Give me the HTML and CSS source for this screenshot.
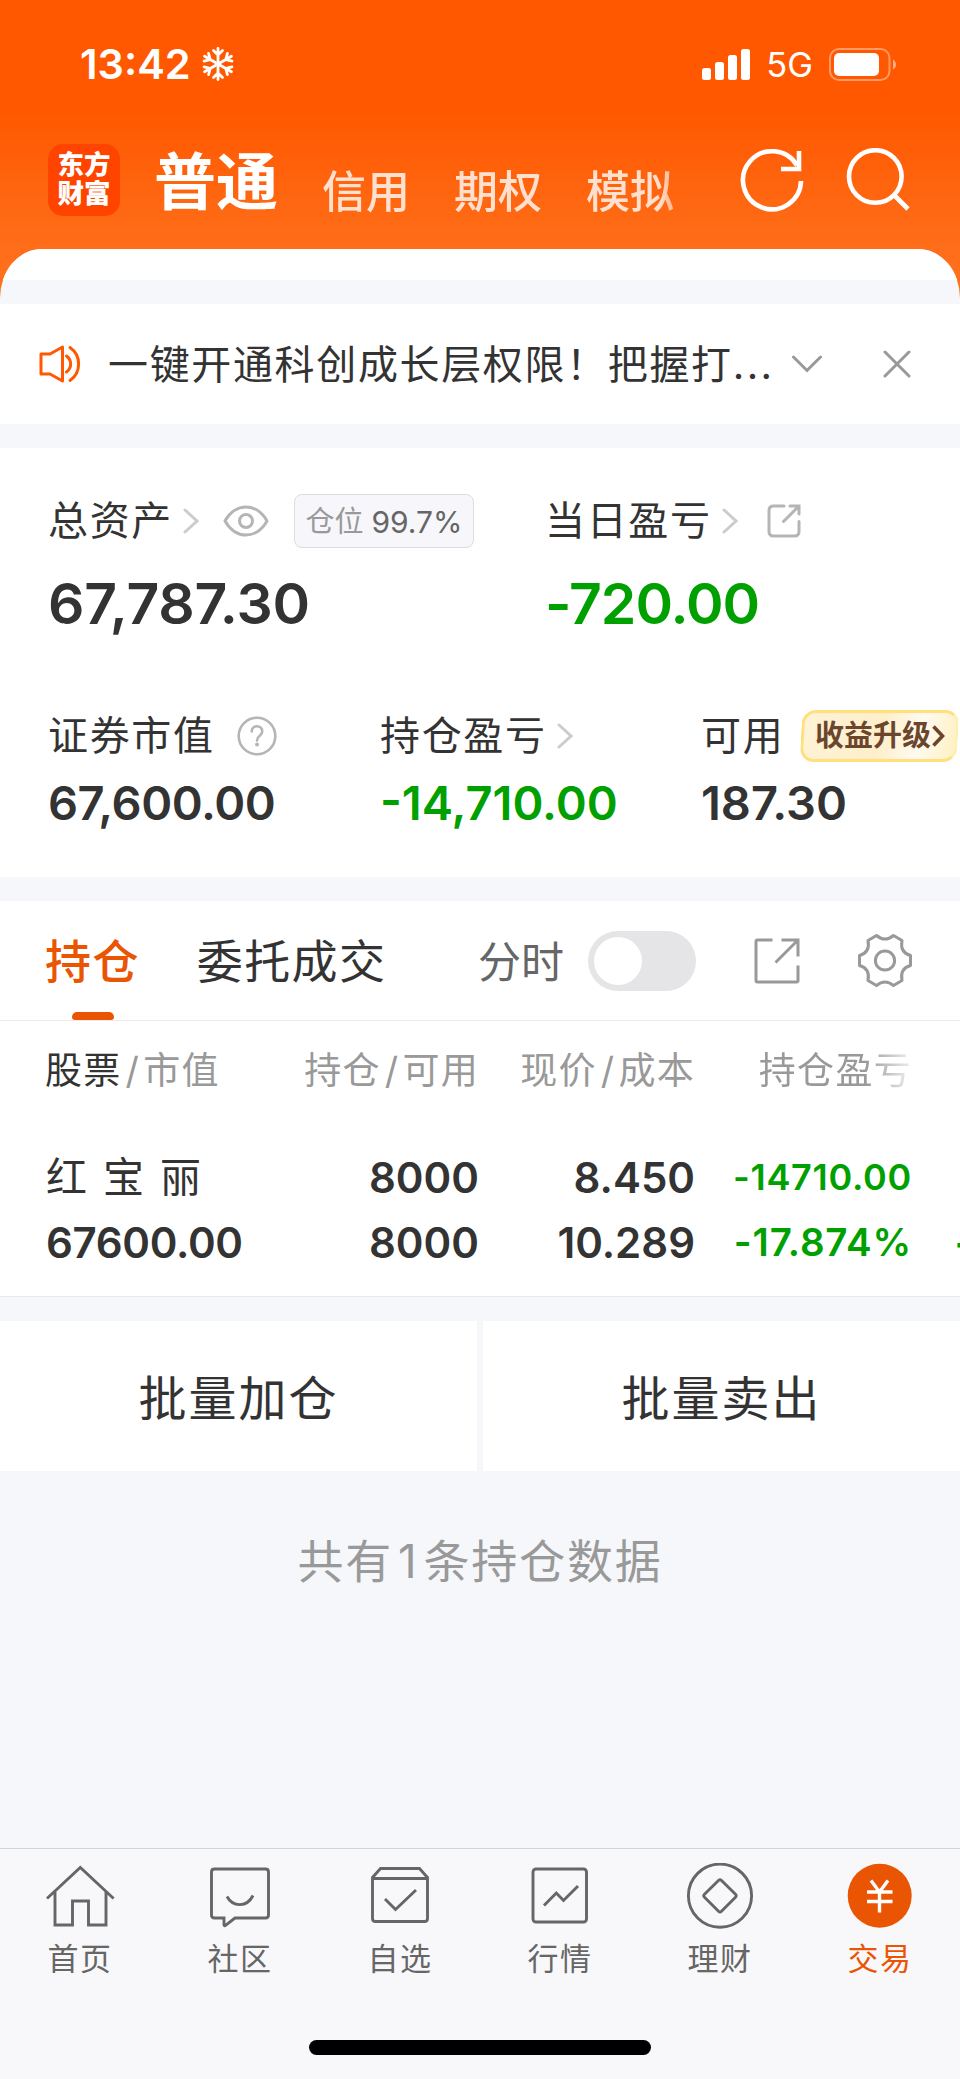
FILE: index.html
```html
<!DOCTYPE html>
<html lang="zh-CN">
<head>
  <meta charset="UTF-8" />
  <title>交易 - 东方财富</title>
  <meta name="viewport" content="width=device-width, initial-scale=1.0" />
  <link rel="stylesheet" href="styles.css">
</head>
<body>
  <div class="app">
    <header class="header">
      <div class="status-bar">
        <span class="time">13:42</span>
        <svg class="snow" width="32" height="36" viewBox="0 0 32 36" fill="none" stroke="#fff" stroke-width="2.8" stroke-linecap="round">
          <g id="arm"><path d="M16 18V2.500M11.500 4.500L16 9l4.500-4.500"/></g>
          <use href="#arm" transform="rotate(60 16 18)"/>
          <use href="#arm" transform="rotate(120 16 18)"/>
          <use href="#arm" transform="rotate(180 16 18)"/>
          <use href="#arm" transform="rotate(240 16 18)"/>
          <use href="#arm" transform="rotate(300 16 18)"/>
        </svg>
        <svg class="signal" width="48" height="31" viewBox="0 0 48 31" fill="#fff">
          <rect x="0" y="19" width="9" height="12" rx="2.500"/>
          <rect x="13" y="13" width="9" height="18" rx="2.500"/>
          <rect x="26" y="6" width="9" height="25" rx="2.500"/>
          <rect x="39" y="0" width="9" height="31" rx="2.500"/>
        </svg>
        <span class="network">5G</span>
        <svg class="battery" width="68" height="33" viewBox="0 0 68 33">
          <rect x="1" y="1" width="59.500" height="31" rx="9" fill="none" stroke="#fff" stroke-opacity=".4" stroke-width="2"/>
          <rect x="5" y="5" width="45" height="23" rx="5" fill="#fff"/>
          <path d="M64 11.500c4 2 4 8 0 10z" fill="#fff" fill-opacity=".5"/>
        </svg>
      </div>
      <div class="nav-bar">
        <div class="logo"><span>东方</span><span>财富</span></div>
        <nav class="accounts">
          <a class="account active">普通</a>
          <a class="account">信用</a>
          <a class="account">期权</a>
          <a class="account">模拟</a>
        </nav>
        <svg class="refresh" width="64" height="64" viewBox="0 0 64 64" fill="none" stroke="#fff" stroke-width="4.600">
          <path d="M61 33A29 29 0 1 1 57 17.500"/>
          <path d="M59 3v18H41"/>
        </svg>
        <svg class="search" width="64" height="64" viewBox="0 0 64 64" fill="none" stroke="#fff" stroke-width="4.600">
          <circle cx="29.300" cy="28.500" r="26.300"/>
          <path d="M48 47l14 14"/>
        </svg>
      </div>
    </header>

    <main class="sheet">
      <div class="sheet-top"></div>

      <section class="notice">
        <svg class="speaker" width="42" height="38" viewBox="0 0 42 38" fill="none" stroke="#ff5800" stroke-width="3" stroke-linecap="round" stroke-linejoin="round">
          <path d="M2 9h9L23.500 2v34L11 29H2z"/>
          <path d="M27.500 11c5.500 4 5.500 12 0 16M31 2.500c11.500 8 11.500 25 0 33"/>
        </svg>
        <p class="notice-text">一键开通科创成长层权限！把握打<span class="dots">...</span></p>
        <svg class="notice-more" width="30" height="18" viewBox="0 0 30 18" fill="none" stroke="#999" stroke-width="3" stroke-linecap="round"><path d="M1.500 2L15 15.500 28.500 2"/></svg>
        <svg class="notice-close" width="28" height="28" viewBox="0 0 28 28" fill="none" stroke="#999" stroke-width="3" stroke-linecap="round"><path d="M2 2l24 24M26 2L2 26"/></svg>
      </section>

      <section class="assets">
        <div class="asset-row main-row">
          <div class="asset">
            <div class="label">总资产
              <svg class="arrow" width="16" height="26" viewBox="0 0 16 26"><path d="M2 2l12 11L2 24"/></svg>
              <svg class="eye" width="46" height="32" viewBox="0 0 46 32" fill="none" stroke="#b5b5b5" stroke-width="3">
                <path d="M2 16C7 7 15 2 23 2s16 5 21 14c-5 9-13 14-21 14S7 25 2 16z" stroke-linejoin="round"/>
                <circle cx="23" cy="16" r="6.500"/>
              </svg>
              <span class="ratio">仓位 <b>99.7%</b></span>
            </div>
            <div class="value total">67,787.30</div>
          </div>
          <div class="asset">
            <div class="label">当日盈亏
              <svg class="arrow" width="16" height="26" viewBox="0 0 16 26"><path d="M2 2l12 11L2 24"/></svg>
              <svg class="share" width="36" height="36" viewBox="0 0 36 36" fill="none" stroke="#b5b5b5" stroke-width="3" stroke-linecap="round">
                <path d="M18 3H7.500Q3 3 3 7.500v21Q3 33 7.500 33h21q4.500 0 4.500-4.500V18.500"/>
                <path d="M24 3h9v8M32.500 3.500L17.500 18.500"/>
              </svg>
            </div>
            <div class="value today down">-720.00</div>
          </div>
        </div>
        <div class="asset-row sub-row">
          <div class="asset">
            <div class="label">证券市值
              <svg class="help" width="40" height="40" viewBox="0 0 40 40" fill="none" stroke="#b5b5b5" stroke-width="2.600">
                <circle cx="20" cy="20" r="18.300"/>
                <path d="M14.800 15.500c0-7 10.400-7 10.400 0 0 4.500-5.200 4-5.200 9" stroke-linecap="round"/>
                <circle cx="20" cy="28.500" r="2" fill="#b5b5b5" stroke="none"/>
              </svg>
            </div>
            <div class="value market">67,600.00</div>
          </div>
          <div class="asset">
            <div class="label">持仓盈亏
              <svg class="arrow" width="16" height="26" viewBox="0 0 16 26"><path d="M2 2l12 11L2 24"/></svg>
            </div>
            <div class="value down">-14,710.00</div>
          </div>
          <div class="asset">
            <div class="label">可用
              <span class="upgrade"><span>收益升级</span>
                <svg width="13" height="22" viewBox="0 0 13 22" fill="none" stroke="#6b462c" stroke-width="3.600"><path d="M1.500 1.500L10.500 11 1.500 20.500"/></svg>
              </span>
            </div>
            <div class="value">187.30</div>
          </div>
        </div>
      </section>

      <section class="positions">
        <div class="tabs">
          <a class="tab active">持仓</a>
          <a class="tab">委托成交</a>
          <span class="minute">分时</span>
          <span class="switch"></span>
          <svg class="export" width="46" height="46" viewBox="0 0 46 46" fill="none" stroke="#999" stroke-width="3">
            <path d="M18.500 2H3.500Q2 2 2 3.500v39Q2 44 3.500 44h39q1.500 0 1.500-1.500V27.500"/>
            <path d="M27.500 2H44V18.500M43.500 2.500L21.500 24.500"/>
          </svg>
          <svg class="gear" width="56" height="56" viewBox="0 0 56 56" fill="none" stroke="#999" stroke-width="3" stroke-linejoin="round">
            <path d="M19.500 2.500Q28 9.500 36.500 2.500L45 7.500C43.500 15 46.500 20.500 53.500 22.500V32.500C46.500 34.500 43.500 40 45 47.500L36.500 52.500Q28 45.500 19.500 52.500L11 47.500C12.500 40 9.500 34.500 2.500 32.500V22.500C9.500 20.500 12.500 15 11 7.500Z"/>
            <circle cx="28" cy="27.500" r="9.600"/>
          </svg>
        </div>
        <div class="table table-head">
          <div><em>股票</em><i>/</i>市值</div>
          <div>持仓<i>/</i>可用</div>
          <div>现价<i>/</i>成本</div>
          <div class="fade">持仓盈亏</div>
        </div>
        <div class="table table-row">
          <div class="stock-name">红宝丽</div>
          <div>8000</div>
          <div>8.450</div>
          <div class="down profit">-14710.00</div>
          <div></div>
          <div class="amount">67600.00</div>
          <div>8000</div>
          <div>10.289</div>
          <div class="down rate">-17.874%</div>
          <div class="down next">-</div>
        </div>
      </section>

      <section class="batch">
        <button class="batch-btn">批量加仓</button>
        <button class="batch-btn">批量卖出</button>
      </section>
      <p class="count">共有<span>1</span>条持仓数据</p>
    </main>

    <footer class="tabbar">
      <div class="tabbar-items">
        <a class="item">
          <svg width="72" height="68" viewBox="0 0 72 68">
            <path d="M3 35.500L36.300 4.500 69.600 35.500M11 29v33h17.500V38h16v24h17.500V29"/>
          </svg>
          <span>首页</span>
        </a>
        <a class="item">
          <svg width="72" height="68" viewBox="0 0 72 68">
            <path d="M10.500 6h51q3 0 3 3v43q0 3-3 3H31L21.500 62.300Q20 63.500 20 61.500V55h-9.500q-3 0-3-3V9q0-3 3-3z"/>
            <path d="M23 33.500c6 11 20 11 26-1"/>
          </svg>
          <span>社区</span>
        </a>
        <a class="item">
          <svg width="72" height="68" viewBox="0 0 72 68">
            <path d="M8.500 14.500L16.500 5.500H55.500L63.500 14.500V55.500q0 3-3 3h-49q-3 0-3-3zM8.500 15.500h55"/>
            <path d="M21 36l10.500 10.500L52 27"/>
          </svg>
          <span>自选</span>
        </a>
        <a class="item">
          <svg width="72" height="68" viewBox="0 0 72 68">
            <rect x="9" y="6" width="53.500" height="53" rx="3"/>
            <path d="M20 42.500L32.300 30 39.500 37.500 54 23"/>
          </svg>
          <span>行情</span>
        </a>
        <a class="item">
          <svg width="72" height="68" viewBox="0 0 72 68">
            <circle cx="36" cy="32.700" r="31.600"/>
            <path d="M34.500 17.500q1.500-1.500 3 0L51.500 31.200q1.500 1.500 0 3L37.500 48.200q-1.500 1.500-3 0L20.500 34.200q-1.500-1.500 0-3z"/>
          </svg>
          <span>理财</span>
        </a>
        <a class="item active">
          <svg width="72" height="68" viewBox="0 0 72 68">
            <circle class="disc" cx="35.700" cy="32.700" r="32"/>
            <path class="yen" d="M27 17.500L35.500 29 44 17.500M23 29h25.500M23 38.500h25.500M35.500 29v20.500"/>
          </svg>
          <span>交易</span>
        </a>
      </div>
      <div class="home-indicator"></div>
    </footer>
  </div>
</body>
</html>
```
FILE: styles.css
```css
* {
  margin: 0;
  padding: 0;
  box-sizing: border-box;
}
body {
  width: 960px;
  background: #f6f7fa;
  color: #333;
  font-family: Inter, "Noto Sans CJK SC", sans-serif;
}
svg {
  display: block;
  flex: none;
}
.app {
  height: 2079px;
  display: flex;
  flex-direction: column;
  overflow: hidden;
  background: linear-gradient(#ff5800 0, #ff5800 112px, #ff6e1a 249px, #ff6e1a 310px) no-repeat;
}

/* header */
.header {
  height: 249px;
  color: #fff;
}
.status-bar {
  height: 128px;
  padding: 0 63px 0 80px;
  display: flex;
  align-items: center;
}
.time {
  font-size: 41.500px;
  font-weight: 600;
  line-height: 50px;
}
.snow {
  margin-left: 11px;
}
.signal {
  margin-left: auto;
}
.network {
  margin: 2px 16px 0 16px;
  font-size: 34.500px;
  line-height: 40px;
}
.nav-bar {
  height: 121px;
  padding: 0 50px 17px 48px;
  display: flex;
  align-items: center;
}
.logo {
  width: 72px;
  height: 72px;
  padding-top: 6px;
  border-radius: 15px;
  background: #ff4400;
  display: flex;
  flex-direction: column;
  align-items: center;
  font-size: 26.500px;
  font-weight: 900;
  line-height: 29px;
}
.accounts {
  flex: 1;
  height: 104px;
  margin-left: 34px;
  display: flex;
  align-items: center;
  gap: 44px;
  -webkit-mask-image: linear-gradient(90deg, #000 505px, transparent 545px);
  mask-image: linear-gradient(90deg, #000 505px, transparent 545px);
}
.account {
  font-size: 44px;
  font-weight: 500;
  line-height: 60px;
  color: rgba(255, 255, 255, 0.8);
  padding-top: 23px;
  white-space: nowrap;
}
.account.active {
  font-size: 62px;
  font-weight: 700;
  color: #fff;
  padding-top: 5px;
}
.refresh {
  margin-right: 42px;
}

/* sheet */
.sheet {
  flex: 1;
  background: #f6f7fa;
  border-radius: 42px 42px 0 0 / 49px 49px 0 0;
  overflow: hidden;
}
.sheet-top {
  height: 31px;
  background: #fff;
  margin-bottom: 24px;
}
.notice {
  height: 120px;
  padding: 0 49px 0 39px;
  background: #fff;
  display: flex;
  align-items: center;
}
.notice-text {
  margin: 2px 0 0 27px;
  width: 669px;
  font-size: 40px;
  line-height: 60px;
  letter-spacing: 1.650px;
  white-space: nowrap;
}
.dots {
  letter-spacing: 2.400px;
}
.notice-more {
  margin-left: 15px;
}
.notice-close {
  margin-left: auto;
}

/* assets */
.assets {
  height: 429px;
  margin-top: 24px;
  padding: 43px 0 0 48px;
  background: #fff;
}
.asset-row {
  display: grid;
}
.main-row {
  grid-template-columns: 497px 1fr;
}
.sub-row {
  grid-template-columns: 332px 321px 1fr;
  margin-top: 67px;
}
.label {
  display: flex;
  align-items: center;
  height: 60px;
  font-size: 40px;
  letter-spacing: 1.650px;
  line-height: 60px;
  white-space: nowrap;
}
.arrow {
  margin-left: 10px;
  fill: none;
  stroke: #ccc;
  stroke-width: 3;
  stroke-linecap: round;
}
.eye {
  margin-left: 24px;
}
.ratio {
  margin-left: 25px;
  width: 180px;
  height: 54px;
  border: 1px solid #dcdcdf;
  border-radius: 8px;
  background: #f7f7fb;
  color: #999;
  font-size: 29px;
  line-height: 54px;
  letter-spacing: 0;
  display: flex;
  gap: 8px;
  justify-content: center;
}
.ratio b {
  font-size: 30px;
  font-weight: 400;
  color: #666;
}
.share {
  margin-left: 28px;
}
.help {
  margin-left: 22px;
}
.value {
  font-weight: 600;
}
.main-row .value {
  margin-top: 18px;
  font-size: 57px;
  line-height: 70px;
}
.main-row .total {
  letter-spacing: -0.250px;
}
.main-row .today {
  letter-spacing: -1px;
}
.sub-row .value {
  margin-top: 11px;
  font-size: 47px;
  line-height: 52px;
}
.sub-row .market {
  letter-spacing: -0.450px;
}
.down {
  color: #00a000;
}
.upgrade {
  margin-left: 17px;
  width: 157px;
  height: 52px;
  padding-left: 11px;
  border: 3px solid #ffe07d;
  border-right-color: #fdf0b4;
  border-radius: 14px;
  transform: skewX(-3deg);
  background: linear-gradient(100deg, #fff3d6 0%, #ffeec9 50%, #fffaf0 75%, #fff1c4 100%);
  color: #6b462c;
  font-size: 29px;
  font-weight: 700;
  letter-spacing: 0;
  display: flex;
  align-items: center;
}
.upgrade > * {
  transform: skewX(3deg);
}
.upgrade svg {
  margin-left: 1px;
}

/* positions */
.positions {
  height: 396px;
  margin-top: 24px;
  background: #fff;
  border-bottom: 1px solid #e6e7ea;
}
.tabs {
  height: 120px;
  padding: 0 47px 0 45px;
  border-bottom: 1px solid #ebebeb;
  display: flex;
  align-items: center;
}
.tab {
  position: relative;
  height: 119px;
  font-size: 46px;
  line-height: 121px;
  letter-spacing: 1.400px;
}
.tab + .tab {
  margin-left: 57px;
}
.tab.active {
  color: #ea5504;
  font-weight: 500;
}
.tab.active::after {
  content: "";
  position: absolute;
  left: 27px;
  bottom: 0;
  width: 42px;
  height: 8px;
  border-radius: 5px 5px 3px 3px;
  background: #ea5504;
}
.minute {
  margin: 2px 0 0 auto;
  color: #666;
  font-size: 43px;
  line-height: 60px;
}
.switch {
  width: 108px;
  height: 60px;
  margin-left: 24px;
  padding: 6px;
  border-radius: 30px;
  background: #e5e5e8;
}
.switch::before {
  content: "";
  display: block;
  width: 48px;
  height: 48px;
  border-radius: 50%;
  background: #fff;
}
.export {
  margin-left: 58px;
}
.gear {
  margin-left: 57px;
}
.table {
  display: grid;
  grid-template-columns: 200px 233px 216px 217px 62px;
  padding-left: 46px;
  text-align: right;
  white-space: nowrap;
}
.table > :nth-child(5n + 1) {
  text-align: left;
}
.table-head {
  padding-top: 20px;
  font-size: 37px;
  line-height: 60px;
  letter-spacing: 1.300px;
  color: #999;
}
.table-head > :first-child {
  margin-left: -1px;
}
.table-head em {
  font-style: normal;
  color: #333;
}
.table-head i {
  font-style: normal;
  margin: 0 3px 0 4px;
}
.fade {
  -webkit-mask-image: linear-gradient(90deg, #000 170px, transparent 225px);
  mask-image: linear-gradient(90deg, #000 170px, transparent 225px);
}
.table-row {
  margin-top: 44px;
  grid-auto-rows: 65px;
  font-size: 42px;
  font-weight: 600;
  line-height: 65px;
}
.table-row .stock-name {
  font-size: 41px;
  font-weight: 400;
  letter-spacing: 16px;
}
.table-row .amount {
  letter-spacing: -0.300px;
}
.profit {
  font-size: 36px;
  letter-spacing: 0.700px;
}
.rate {
  font-size: 38.500px;
  letter-spacing: 0.800px;
}

/* batch buttons */
.batch {
  margin-top: 24px;
  display: grid;
  grid-template-columns: 1fr 1fr;
  gap: 6px;
}
.batch-btn {
  height: 150px;
  padding-bottom: 3px;
  border: none;
  background: #fff;
  color: #333;
  font-family: inherit;
  font-size: 48px;
  letter-spacing: 2px;
}
.count {
  margin-top: 60px;
  text-align: center;
  color: #999;
  font-size: 46px;
  line-height: 60px;
  letter-spacing: 1.800px;
}
.count span {
  margin: 0 5px;
}

/* bottom bar */
.tabbar {
  height: 231px;
  background: #f8f8fb;
  border-top: 1px solid #d2d3d6;
}
.tabbar-items {
  padding-top: 14px;
  display: grid;
  grid-template-columns: repeat(6, 1fr);
}
.item {
  display: flex;
  flex-direction: column;
  align-items: center;
  color: #666;
  font-size: 31px;
  line-height: 40px;
  letter-spacing: 1.500px;
}
.item svg {
  fill: none;
  stroke: #666;
  stroke-width: 2.900;
  margin-bottom: 8px;
}
.item.active {
  color: #ea5504;
}
.item .disc {
  fill: #ea5504;
  stroke: none;
}
.item .yen {
  stroke: #fff;
  stroke-width: 3.400;
}
.home-indicator {
  width: 342px;
  height: 15px;
  margin: 61px auto 0;
  border-radius: 8px;
  background: #000;
}
```
